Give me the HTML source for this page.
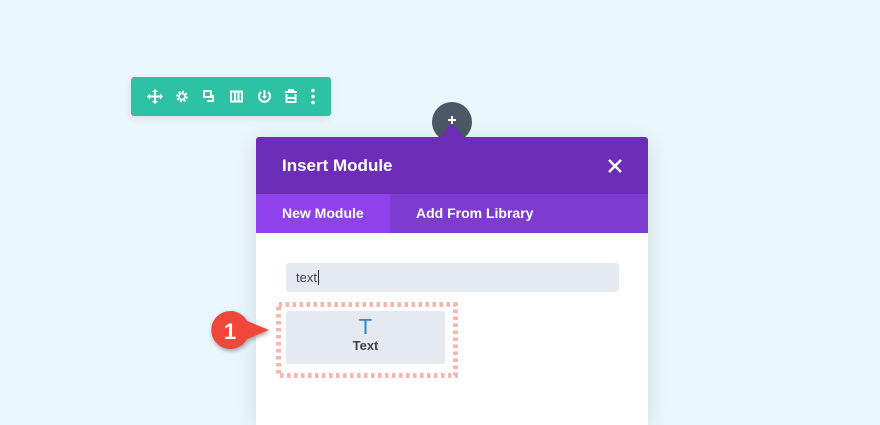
<!DOCTYPE html>
<html><head><style>
body{margin:0;width:880px;height:425px;background:#eaf8fd;position:relative;overflow:hidden;font-family:"Liberation Sans",sans-serif}
.tb{position:absolute;left:131px;top:77px;width:200px;height:39px;background:#2ec2a4;border-radius:3px;box-shadow:0 2px 8px rgba(0,0,0,.1)}
.tb svg{position:absolute;left:0;top:0}
.circ{position:absolute;left:432px;top:102px;width:40px;height:40px;border-radius:50%;background:#4b5966}
.modal{position:absolute;left:256px;top:137px;width:392px;height:288px;background:#fff;box-shadow:0 4px 24px rgba(0,0,0,.12);border-radius:3px 3px 0 0}
.hd{height:57px;background:#6c2eb9;color:#fff;font-size:17px;font-weight:bold;line-height:57px;padding-left:26px;border-radius:3px 3px 0 0;position:relative}
.tabs{height:39px;background:#7e3bd0;color:#fff;font-size:14px;font-weight:bold;position:relative}
.tab{position:absolute;top:0;height:39px;line-height:39px}
.inp{position:absolute;left:30px;top:126px;width:333px;height:29px;background:#e5e9f0;border-radius:3px;font-size:13px;color:#444;line-height:29px;padding-left:10px;box-sizing:border-box}
.card{position:absolute;left:30px;top:174px;width:159px;height:53px;background:#e5e9f0;border-radius:3px;text-align:center;font-size:13px;font-weight:bold;color:#444}
</style></head><body>
<div class="tb"><svg width="200" height="39" fill="#fff" stroke="#fff">
<g stroke-width="2" fill="none"><path d="M24 13v13M17.5 19.5h13"/></g>
<path d="M21 15l3-3 3 3zM21 24l3 3 3-3zM19 16.5l-3 3 3 3zM29 16.5l3 3-3 3z" stroke="none"/>
<circle cx="51" cy="19.5" r="4.5" fill="none" stroke-width="2.5" stroke-dasharray="2 1.5"/><circle cx="51" cy="19.5" r="3" fill="none" stroke-width="1.6"/>
<g fill="none" stroke-width="2"><rect x="73" y="14" width="7" height="6"/><path d="M82 18v6h-6"/></g>
<g fill="none" stroke-width="2"><rect x="100" y="14.5" width="11" height="10"/><path d="M104 14.5v10M107.5 14.5v10"/></g>
<g fill="none" stroke-width="2"><path d="M130 15a5.5 5.5 0 1 0 7 0"/><path d="M133.5 13v8"/></g><path d="M131 19l2.5 3 2.5-3z" stroke="none"/>
<g fill="none" stroke-width="2"><path d="M154 15h12M157 13h6M155.5 17v8h9v-8M155.5 21h9"/></g>
<circle cx="182" cy="13.5" r="1.8" stroke="none"/><circle cx="182" cy="19.5" r="1.8" stroke="none"/><circle cx="182" cy="25.5" r="1.8" stroke="none"/>
</svg></div>
<div class="circ"></div>
<div class="modal">
<div class="hd">Insert Module<svg style="position:absolute;left:352px;top:22px" width="14" height="14" stroke="#fff" stroke-width="2.5"><path d="M1 1l12 12M13 1L1 13"/></svg></div>
<div class="tabs"><div class="tab" style="left:0;width:134px;background:#8f42ec;padding-left:26px;box-sizing:border-box">New Module</div><div class="tab" style="left:160px">Add From Library</div></div>
<div class="inp">text<span style="border-left:1px solid #333;margin-left:1px"></span></div>
<div class="card"><div style="color:#2b87da;font-size:20px;margin-top:5px;line-height:22px;font-family:'DejaVu Sans',sans-serif;font-weight:normal">T</div><div>Text</div></div>
</div>
<svg style="position:absolute;left:0;top:0" width="880" height="425"><path d="M452 122l-12 16h24z" fill="#6c2eb9"/><path d="M452 116v8M448 120h8" stroke="#fff" stroke-width="2"/>
<rect x="278.5" y="304.5" width="177" height="71" fill="none" stroke="#f7b6ac" stroke-width="5" stroke-dasharray="3.5 3.5"/>
<g filter="drop-shadow(1px 2px 2px rgba(0,0,0,.35))"><path d="M230 311a19 19 0 0 1 17 10l22 9-22 9a19 19 0 1 1-17-28z" fill="#f0473a"/></g>
<text x="230" y="339" font-family="Liberation Sans" font-weight="bold" font-size="22" fill="#fff" text-anchor="middle">1</text></svg>
</body></html>
